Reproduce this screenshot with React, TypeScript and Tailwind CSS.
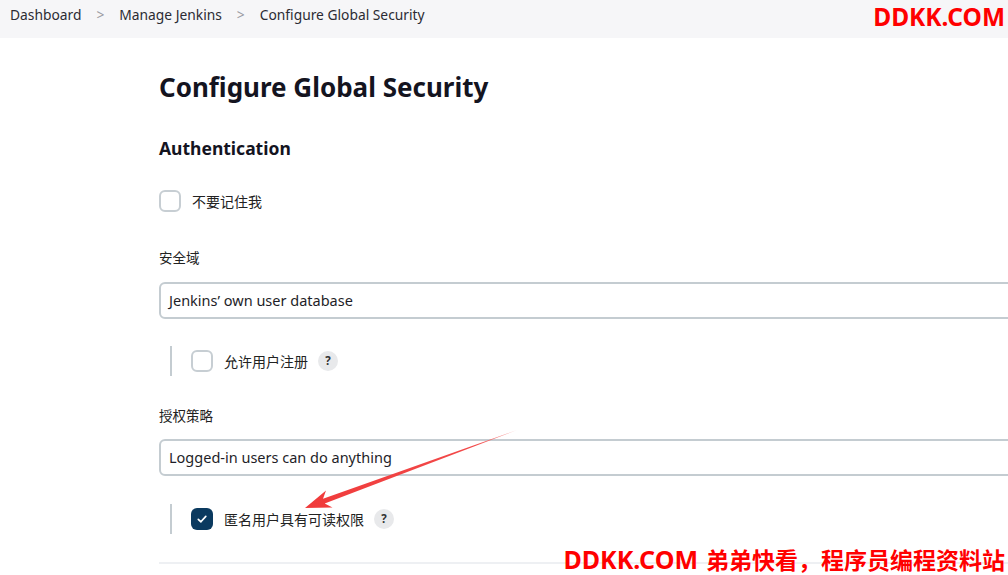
import React from "react"

const font = { fontFamily: '"Noto Sans", "Noto Sans CJK SC", sans-serif' }

function Check({ checked }: { checked?: boolean }) {
  if (checked) {
    return (
      <span className="flex h-[22px] w-[22px] items-center justify-center rounded-[6px] bg-[#0b3a5f]">
        <svg width="12" height="12" viewBox="0 0 12 12" fill="none">
          <path d="M2.3 6.3 L4.9 8.8 L9.8 3.4" stroke="#fff" strokeWidth="1.7" strokeLinecap="round" strokeLinejoin="round" />
        </svg>
      </span>
    )
  }
  return <span className="block h-[22px] w-[22px] rounded-[6px] border-2 border-[#c7ced3] bg-white" />
}

function Help() {
  return (
    <span className="ml-[10px] flex h-[20px] w-[20px] items-center justify-center rounded-full bg-[#e8e9eb] text-[11.5px] font-bold text-[#333]">
      ?
    </span>
  )
}

function Select({ value }: { value: string }) {
  return (
    <div className="flex h-[37px] w-[900px] items-center rounded-[6px] border-2 border-[#c4ccd1] bg-white pl-[8px] text-[14.5px] text-[#1e1e28]">
      {value}
    </div>
  )
}

function Nested({ label, checked }: { label: string; checked?: boolean }) {
  return (
    <div className="ml-[11px] flex h-[30px] items-center border-l-2 border-[#c4ccd1] pl-[19px]">
      <Check checked={checked} />
      <span className="ml-[11px] text-[14px] text-[#222]">{label}</span>
      <Help />
    </div>
  )
}

export default function App() {
  return (
    <div className="relative h-[575px] w-[1008px] overflow-hidden bg-white text-[#14141f]" style={font}>
      <header className="flex h-[38px] items-start justify-between bg-[#f6f6f8] pl-[10px] pr-[3px]">
        <nav className="mt-[5px] flex items-center text-[13.8px] leading-[20px] text-[#2b2b33]">
          <span>Dashboard</span>
          <span className="mx-[15px] text-[#9a9aa2]">&gt;</span>
          <span>Manage Jenkins</span>
          <span className="mx-[15px] text-[#9a9aa2]">&gt;</span>
          <span>Configure Global Security</span>
        </nav>
        <span className="mt-[1px] text-[24.5px] font-bold leading-[32px] text-[#ff0000]">DDKK.COM</span>
      </header>

      <main className="pl-[159px]">
        <h1 className="mt-[31px] text-[26px] font-bold leading-[36px]">Configure Global Security</h1>
        <h2 className="mt-[30px] text-[17.5px] font-bold leading-[26px]">Authentication</h2>

        <div className="mt-[29px] flex items-center">
          <Check />
          <span className="ml-[11px] text-[14px] text-[#222]">不要记住我</span>
        </div>

        <div className="mt-[36px] text-[13.5px] leading-[20px] text-[#222]">安全域</div>
        <div className="mt-[14px]">
          <Select value="Jenkins’ own user database" />
        </div>
        <div className="mt-[27px]">
          <Nested label="允许用户注册" />
        </div>

        <div className="mt-[30px] text-[13.5px] leading-[20px] text-[#222]">授权策略</div>
        <div className="mt-[13px]">
          <Select value="Logged-in users can do anything" />
        </div>
        <div className="mt-[28px]">
          <Nested label="匿名用户具有可读权限" checked />
        </div>

        <div className="mt-[28px] h-[2px] w-[900px] bg-[#eef0f3]" />
      </main>

      <svg className="pointer-events-none absolute left-0 top-0" width="1008" height="575">
        <defs>
          <linearGradient id="arr" x1="305" y1="508" x2="517" y2="430" gradientUnits="userSpaceOnUse">
            <stop offset="0" stopColor="#f03a3a" />
            <stop offset="0.8" stopColor="#f24a4a" />
            <stop offset="1" stopColor="#f8a0a0" />
          </linearGradient>
        </defs>
        <polygon points="305,508 326,490.5 323,498.8 517,430 324.7,503.4 332.5,507.5" fill="url(#arr)" />
      </svg>

      <div className="absolute bottom-0 right-[3px] flex items-baseline font-bold leading-[30px] text-[#ff0000]">
        <span className="text-[25px]">DDKK.COM</span>
        <span className="ml-[8px] text-[23px]">弟弟快看，程序员编程资料站</span>
      </div>
    </div>
  )
}
